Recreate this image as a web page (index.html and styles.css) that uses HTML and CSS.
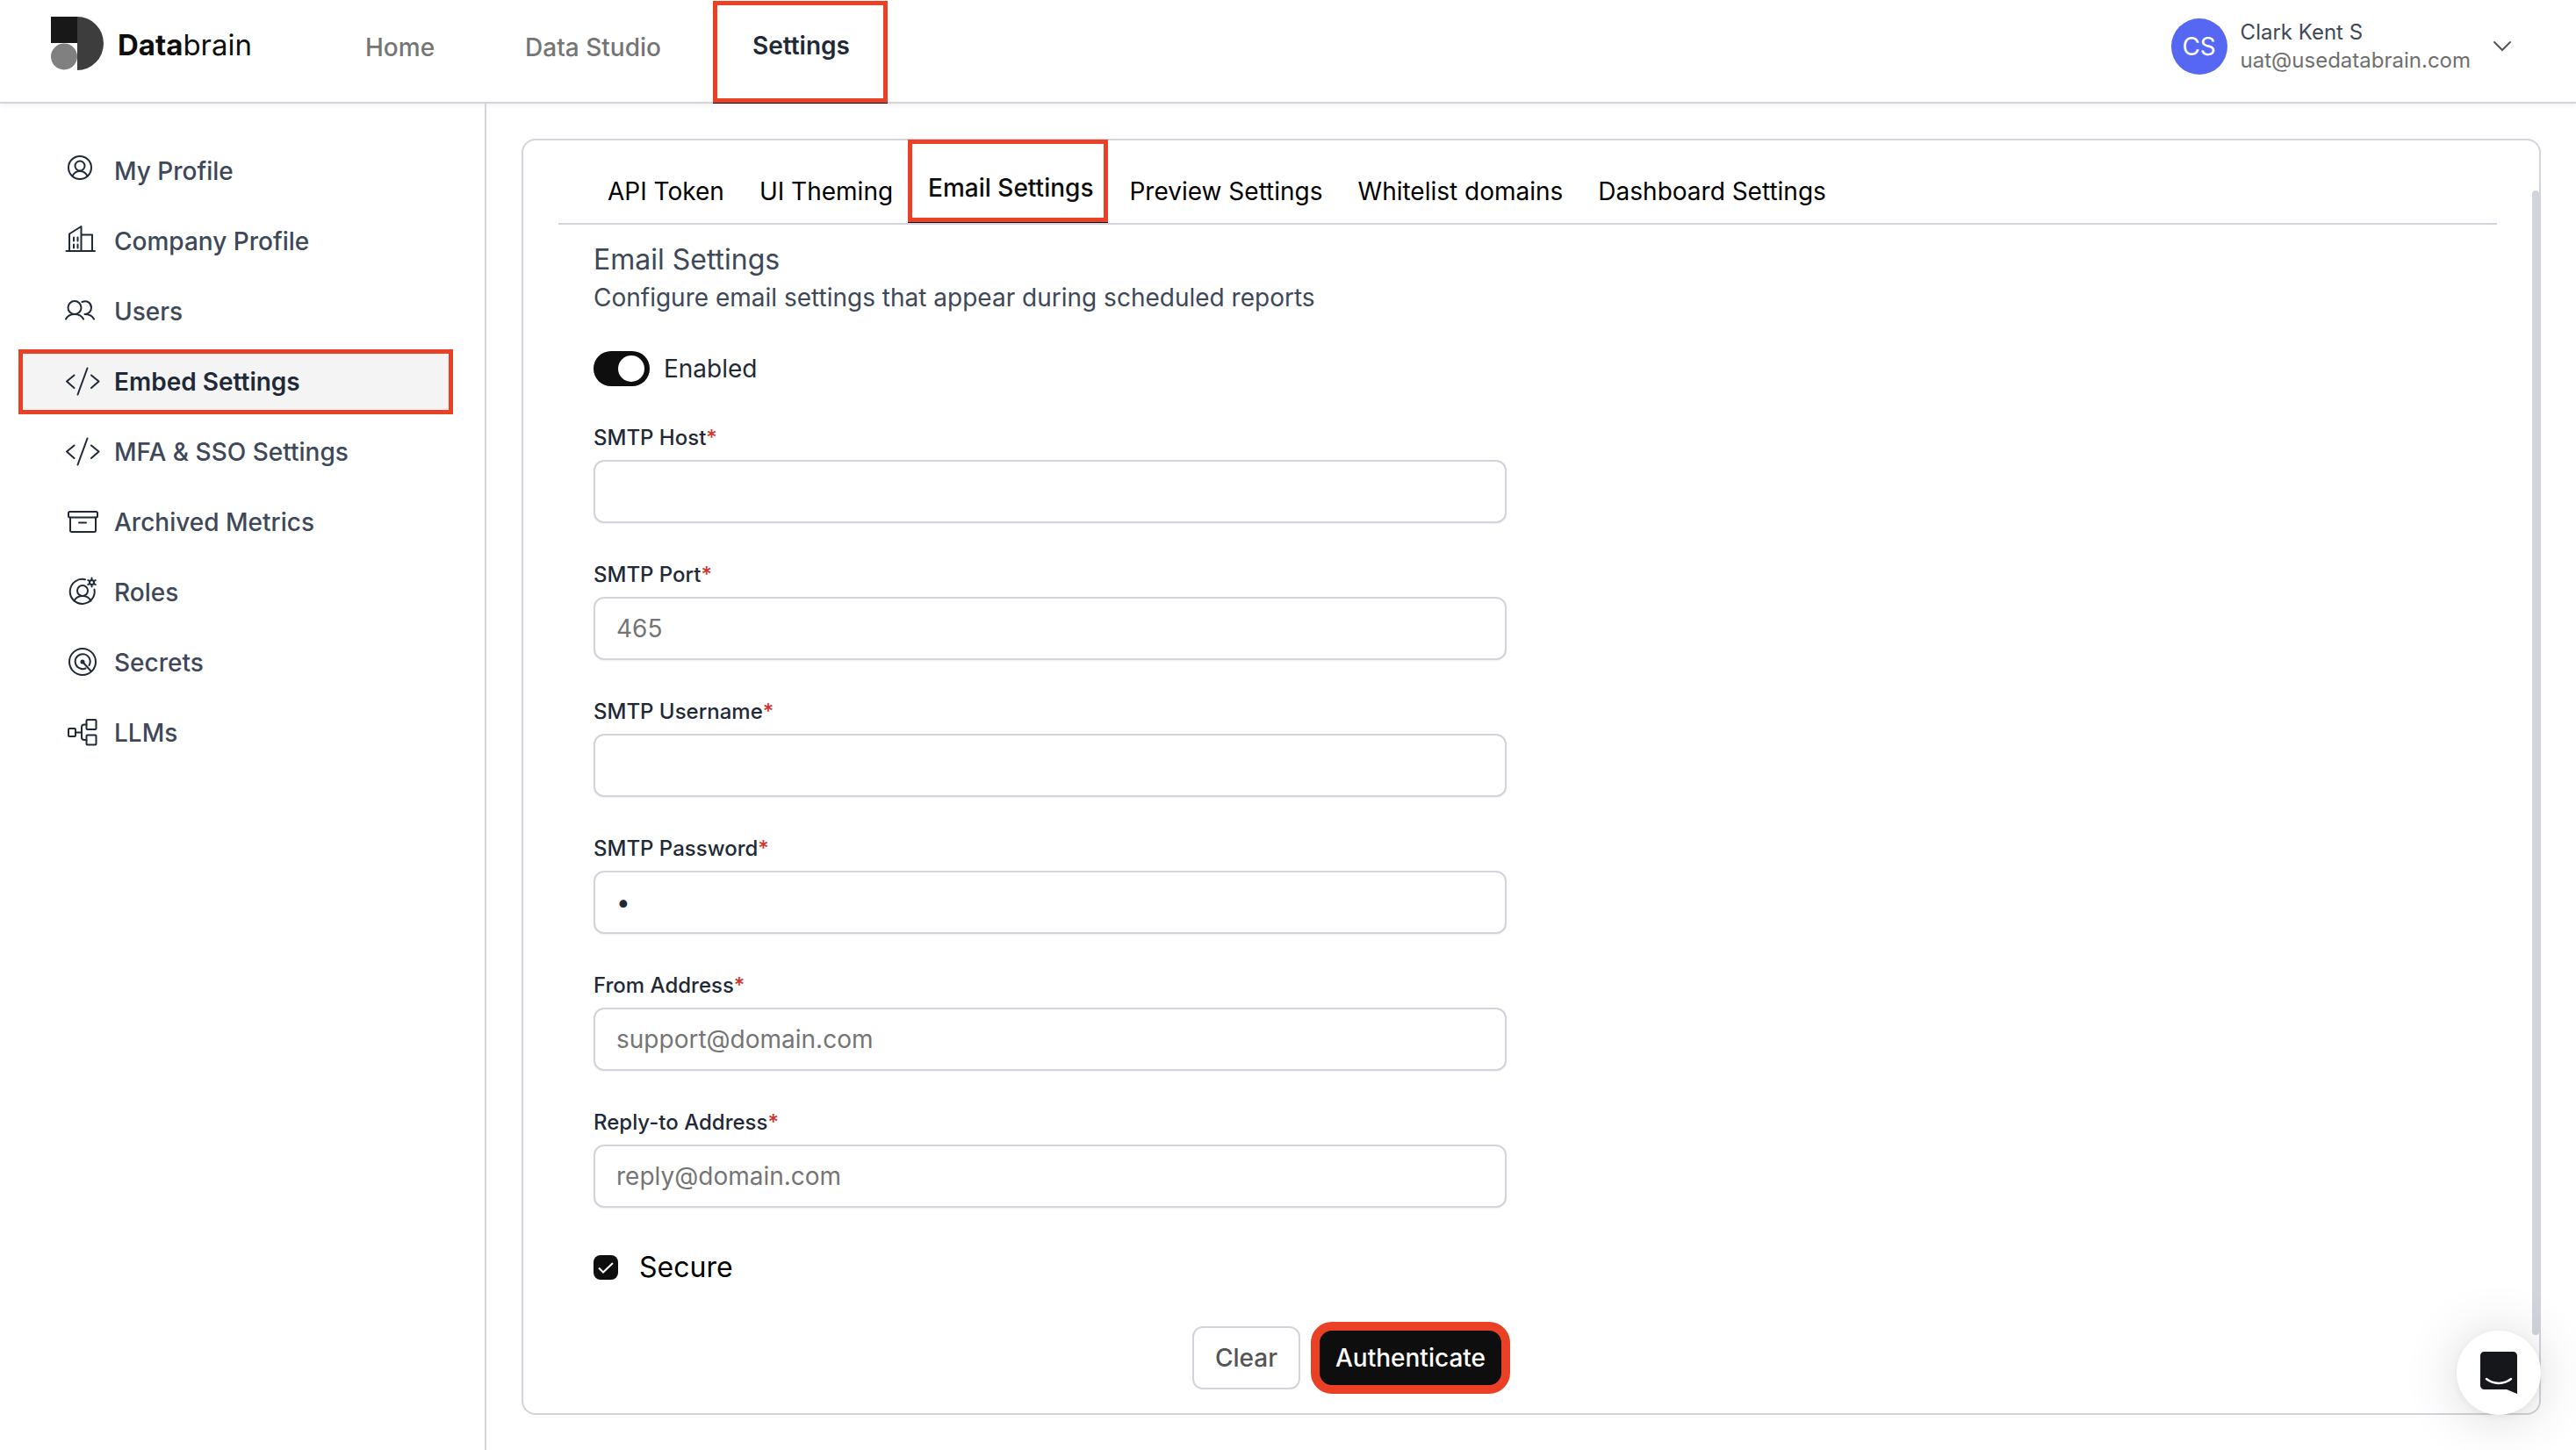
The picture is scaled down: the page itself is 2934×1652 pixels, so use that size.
FILE: index.html
```html
<!DOCTYPE html>
<html lang="en">
<head>
<meta charset="utf-8">
<title>Databrain - Email Settings</title>
<link rel="stylesheet" href="styles.css">
</head>
<body>
<header class="topbar">
  <a class="brand" href="#">
    <svg class="brand-mark" viewBox="0 0 60 61" aria-hidden="true">
      <path d="M30 0a30 30.500 0 0 1 0 61z" fill="#3d3d3d"/>
      <rect width="30" height="30" fill="#181818"/>
      <circle cx="15" cy="45.500" r="15" fill="#808080"/>
    </svg>
    <span class="brand-name"><b>Data</b>brain</span>
  </a>
  <nav class="mainnav">
    <a href="#">Home</a>
    <a href="#">Data Studio</a>
    <a class="current" href="#">Settings</a>
  </nav>
  <button class="account" type="button">
    <span class="avatar">CS</span>
    <span class="who"><span class="who-name">Clark Kent S</span><span>uat@usedatabrain.com</span></span>
    <svg class="chevron" viewBox="0 0 24 16" aria-hidden="true"><path d="M3 3l9 9 9-9"/></svg>
  </button>
</header>
<div class="shell">
  <nav class="sidebar">
    <a href="#"><svg viewBox="0 0 40 40" aria-hidden="true"><circle cx="17" cy="16" r="13"/><circle cx="17" cy="14" r="5.500"/><path d="M8.500 25.500c2-4 5-5.500 8.500-5.500s6.500 1.500 8.500 5.500"/></svg>My Profile</a>
    <a href="#"><svg viewBox="0 0 40 40" aria-hidden="true"><path d="M1.500 31H34M5 31V11.500L18.500 3v28M18.500 12.500H31V31"/><path d="M10 15.500v4M14.500 15.500v4M10 23.500v4M14.500 23.500v4"/></svg>Company Profile</a>
    <a href="#"><svg viewBox="0 0 40 40" aria-hidden="true"><circle cx="11" cy="15.500" r="7.500"/><path d="M1 28.500c2-4 6-5.500 10-5.500s8 1.500 10 5.500M19.500 9c5.500-2.500 10.500 1.500 10.500 6.500 0 4-3 7.500-7.500 7.500 4.500 0 8.500 1.500 10.500 5.500"/></svg>Users</a>
    <a class="current" href="#"><svg viewBox="0 0 40 40" aria-hidden="true"><path d="M10.500 12.500L2 19.500l8.500 7.500M30 12.500l8.500 7L30 27M25.500 4.500l-11 30"/></svg>Embed Settings</a>
    <a href="#"><svg viewBox="0 0 40 40" aria-hidden="true"><path d="M10.500 12.500L2 19.500l8.500 7.500M30 12.500l8.500 7L30 27M25.500 4.500l-11 30"/></svg>MFA &amp; SSO Settings</a>
    <a href="#"><svg viewBox="0 0 40 40" aria-hidden="true"><rect x="4" y="8" width="33" height="6.500" rx="1.500"/><path d="M6 14.500V29.500a1.500 1.500 0 0 0 1.500 1.500h26a1.500 1.500 0 0 0 1.500-1.500V14.500M16 20.500h8"/></svg>Archived Metrics</a>
    <a href="#"><svg viewBox="0 0 40 40" aria-hidden="true"><path d="M23 5.300a14 14 0 1 0 10.500 11.200"/><circle cx="20" cy="18" r="6"/><path d="M10.500 29.500c2-4 5.500-5.500 9.500-5.500s7.500 1.500 9.500 5.500"/><circle cx="30.500" cy="8.500" r="2.500"/><path d="M30.500 3.500v2.500M30.500 11v2.500M26.200 6l2 1.200M32.800 9.800l2 1.200M26.200 11l2-1.200M32.800 7.200l2-1.200"/></svg>Roles</a>
    <a href="#"><svg viewBox="0 0 40 40" aria-hidden="true"><circle cx="20" cy="19" r="15"/><path d="M23.500 26.500a8.500 8.500 0 1 1 4-3.500M20 19l9.500 10.500"/><circle cx="20" cy="19" r="1.500"/></svg>Secrets</a>
    <a href="#"><svg viewBox="0 0 40 40" aria-hidden="true"><rect x="4" y="15" width="8" height="9" rx="1"/><rect x="24.500" y="5" width="11" height="11" rx="1"/><rect x="24.500" y="22.500" width="11" height="11" rx="1"/><path d="M12 19.500h7M24.500 10.500H22a3 3 0 0 0-3 3v11.500a3 3 0 0 0 3 3h2.500"/></svg>LLMs</a>
  </nav>
  <main class="content">
    <section class="panel">
      <nav class="tabs">
        <a href="#">API Token</a>
        <a href="#">UI Theming</a>
        <a class="current" href="#">Email Settings</a>
        <a href="#">Preview Settings</a>
        <a href="#">Whitelist domains</a>
        <a href="#">Dashboard Settings</a>
      </nav>
      <form class="form">
        <div class="intro">
          <h1>Email Settings</h1>
          <p>Configure email settings that appear during scheduled reports</p>
        </div>
        <label class="toggle"><input type="checkbox" role="switch" checked>Enabled</label>
        <div class="field"><label for="host">SMTP Host<i>*</i></label><input id="host" type="text"></div>
        <div class="field"><label for="port">SMTP Port<i>*</i></label><input id="port" type="text" placeholder="465"></div>
        <div class="field"><label for="user">SMTP Username<i>*</i></label><input id="user" type="text"></div>
        <div class="field"><label for="pass">SMTP Password<i>*</i></label><input id="pass" type="password" value="0"></div>
        <div class="field"><label for="from">From Address<i>*</i></label><input id="from" type="email" placeholder="support@domain.com"></div>
        <div class="field"><label for="reply">Reply-to Address<i>*</i></label><input id="reply" type="email" placeholder="reply@domain.com"></div>
        <div class="secure">
          <span class="tick"><input id="secure" type="checkbox" checked><svg viewBox="0 0 28 28" aria-hidden="true"><path d="M6 14.500l5 5L22 9"/></svg></span>
          <label for="secure">Secure</label>
        </div>
        <div class="actions">
          <button class="clear" type="reset">Clear</button>
          <button class="primary" type="submit">Authenticate</button>
        </div>
      </form>
      <div class="scroll-thumb"></div>
    </section>
  </main>
</div>
<button class="chat" type="button" aria-label="Open chat">
  <svg viewBox="0 0 42 48" aria-hidden="true"><path d="M4.500 0h33A4.500 4.500 0 0 1 42 4.500V48l-12-5H4.500A4.500 4.500 0 0 1 0 38.500v-34A4.500 4.500 0 0 1 4.500 0z" fill="#16171b"/><path d="M7 31c8 6.500 20 6.500 28 0" fill="none" stroke="#fff" stroke-width="2.500" stroke-linecap="round"/></svg>
</button>
</body>
</html>
```
FILE: styles.css
```css
:root {
  --line: #d1d5db;
  --mark: #ea4025;
  --ink: #1f2937;
  --slate: #3e4858;
  --grey: #757575;
  --black: #0e0e0e;
}

* { box-sizing: border-box; }

body {
  margin: 0;
  min-height: 100vh;
  display: flex;
  flex-direction: column;
  background: #fff;
  color: #000;
  font: 400 28px/40px Inter, "Liberation Sans", sans-serif;
}

a { color: inherit; text-decoration: none; }
button, input { font: inherit; color: inherit; margin: 0; }

.topbar {
  display: flex;
  align-items: flex-start;
  height: 118px;
  padding: 0 72px 0 58px;
  border-bottom: 2px solid var(--line);
  box-shadow: 0 2px 6px rgba(0, 0, 0, .06);
}

.brand {
  display: flex;
  align-items: center;
  gap: 16px;
  width: 358px;
  padding-top: 19px;
}
.brand-mark { width: 60px; height: 61px; }
.brand-name { padding-top: 2px; font-size: 33px; color: var(--black); }

.mainnav { display: flex; flex: 1; color: var(--grey); font-weight: 500; }
.mainnav a { padding: 34px 0 0; margin-right: 103px; }
.mainnav a + a { margin-right: 59px; }
.mainnav .current {
  height: 116px;
  padding: 26px 38px 0 40px;
  margin-top: 1px;
  border: 5px solid var(--mark);
  box-shadow: 0 1px 0 #000;
  color: var(--ink);
  font-weight: 600;
}

.account {
  display: flex;
  align-items: center;
  gap: 15px;
  padding: 21px 0 0;
  border: 0;
  background: none;
  text-align: left;
  color: #6f6f6f;
}
.avatar {
  width: 64px;
  height: 64px;
  border-radius: 50%;
  background: #5567f3;
  color: #fff;
  line-height: 64px;
  text-align: center;
}
.who { display: grid; font-size: 24px; line-height: 32px; }
.who-name { color: var(--slate); }
.chevron { width: 24px; height: 16px; margin-left: 9px; fill: none; stroke: #555; stroke-width: 2; stroke-linecap: round; }

.shell { display: flex; flex: 1; }

.sidebar {
  display: flex;
  flex-direction: column;
  gap: 6px;
  width: 554px;
  padding: 40px 36px 40px 21px;
  border-right: 2px solid var(--line);
  color: var(--slate);
  font-weight: 500;
}
.sidebar a {
  display: flex;
  align-items: center;
  gap: 16px;
  height: 74px;
  padding-left: 48px;
  border: 5px solid transparent;
}
.sidebar .current {
  border-color: var(--mark);
  background: #f4f4f4;
  color: var(--ink);
  font-weight: 600;
}
.sidebar svg {
  width: 40px;
  height: 40px;
  fill: none;
  stroke: var(--ink);
  stroke-width: 2;
  stroke-linecap: round;
  stroke-linejoin: round;
}

.content { display: flex; flex: 1; padding: 40px; }

.panel {
  position: relative;
  flex: 1;
  padding: 0 48px 22px 40px;
  border: 2px solid var(--line);
  border-radius: 16px;
}

.tabs {
  display: flex;
  align-items: flex-start;
  gap: 40px;
  height: 96px;
  padding-left: 56px;
  border-bottom: 2px solid var(--line);
}
.tabs a { padding-top: 38px; }
.tabs .current {
  height: 94px;
  margin: -1px -16px 0 -23px;
  padding: 30px 12px 0 18px;
  border: 5px solid var(--mark);
  box-shadow: 0 1px 0 #000;
  font-weight: 500;
  color: var(--black);
}

.form {
  display: flex;
  flex-direction: column;
  gap: 42px;
  max-width: 1080px;
  padding: 20px 0 0 40px;
}
.intro { color: var(--slate); }
.intro h1 { margin: 0; font-size: 32px; line-height: 40px; font-weight: 400; }
.intro p { margin: 4px 0 0; line-height: 38px; }

.toggle {
  display: flex;
  align-items: center;
  gap: 16px;
  color: var(--ink);
}
.toggle input {
  appearance: none;
  width: 64px;
  height: 40px;
  padding: 5px 5px 5px 28px;
  border-radius: 20px;
  background: var(--black);
}
.toggle input::before {
  content: "";
  display: block;
  width: 30px;
  height: 30px;
  border-radius: 50%;
  background: #fff;
}

.field { display: grid; gap: 8px; }
.field label { font-size: 24px; line-height: 34px; font-weight: 500; color: var(--ink); }
.field i { font-style: normal; color: #d0342c; }
.field input {
  width: 100%;
  height: 72px;
  padding: 0 24px;
  border: 2px solid var(--line);
  border-radius: 12px;
  background: #fff;
  box-shadow: 0 1px 2px rgba(0, 0, 0, .06);
  color: var(--ink);
}
.field input::placeholder { color: var(--grey); opacity: 1; }

.secure { display: flex; align-items: center; gap: 24px; margin-top: 6px; font-size: 32px; }
.tick { display: grid; width: 28px; height: 28px; }
.tick > * { grid-area: 1 / 1; width: 28px; height: 28px; }
.tick input { appearance: none; border-radius: 8px; background: var(--black); }
.tick svg { pointer-events: none; fill: none; stroke: #fff; stroke-width: 2; }

.actions { display: flex; justify-content: flex-end; align-items: center; gap: 12px; margin-right: -4px; }
.actions button { font-weight: 500; }
.clear {
  height: 72px;
  padding: 0 24px;
  border: 2px solid var(--line);
  border-radius: 12px;
  background: #fff;
  color: #555;
}
.primary {
  height: 82px;
  padding: 0 18px;
  border: 10px solid var(--mark);
  border-radius: 24px;
  background: var(--black);
  color: #fff;
}

.scroll-thumb {
  position: absolute;
  top: 57px;
  right: 0;
  bottom: 89px;
  width: 8px;
  border-radius: 4px;
  background: var(--line);
}

.chat {
  position: fixed;
  right: 40px;
  bottom: 40px;
  display: grid;
  place-items: center;
  width: 96px;
  height: 96px;
  padding: 0;
  border: 0;
  border-radius: 50%;
  background: #fff;
  box-shadow: 0 2px 12px rgba(0, 0, 0, .06), 0 4px 64px rgba(0, 0, 0, .16);
}
.chat svg { width: 42px; height: 48px; }
```
